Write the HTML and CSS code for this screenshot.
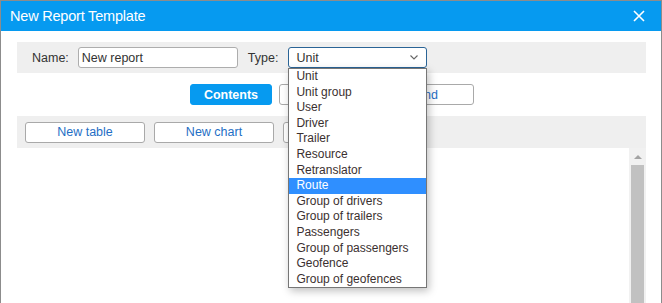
FILE: index.html
```html
<!DOCTYPE html>
<html lang="en">
<head>
  <meta charset="UTF-8" />
  <title>New Report Template</title>
  <link rel="stylesheet" href="styles.css">
</head>
<body>
  <div class="dialog">
    <div class="dialog-header">
      <span class="dialog-title">New Report Template</span>
      <span class="dialog-close">
        <svg width="12" height="12" viewBox="0 0 12 12"><path d="M1 1L11 11M11 1L1 11" stroke="#fff" stroke-width="1.6"/></svg>
      </span>
    </div>

    <div class="dialog-body">
      <div class="name-row">
        <label class="field-label">Name:</label>
        <input class="name-input" type="text" value="New report">
        <label class="field-label type-label">Type:</label>
        <div class="type-select">
          <div class="select-box">
            <span>Unit</span>
            <svg width="8" height="5" viewBox="0 0 8 5"><path d="M0.5 0.5L4 4L7.5 0.5" stroke="#666" stroke-width="1.1" fill="none"/></svg>
          </div>
          <ul class="select-list">
            <li>Unit</li>
            <li>Unit group</li>
            <li>User</li>
            <li>Driver</li>
            <li>Trailer</li>
            <li>Resource</li>
            <li>Retranslator</li>
            <li class="active">Route</li>
            <li>Group of drivers</li>
            <li>Group of trailers</li>
            <li>Passengers</li>
            <li>Group of passengers</li>
            <li>Geofence</li>
            <li>Group of geofences</li>
          </ul>
        </div>
      </div>

      <div class="tabs">
        <button class="tab active">Contents</button>
        <button class="tab wide">Background</button>
      </div>

      <div class="toolbar">
        <button class="tool-btn">New table</button>
        <button class="tool-btn">New chart</button>
        <button class="tool-btn"></button>
      </div>

      <div class="content">
        <div class="content-list"></div>
        <div class="scrollbar">
          <div class="scroll-up"></div>
          <div class="scroll-thumb"></div>
        </div>
      </div>
    </div>
  </div>
</body>
</html>
```

FILE: styles.css
```css
body {
  font-family: 'Liberation Sans', Arial, sans-serif;
  margin: 0;
  padding: 0;
  background: #fff;
  overflow: hidden;
}

.dialog {
  width: 662px;
  height: 303px;
  box-sizing: border-box;
  border: 1px solid #8c8c8c;
  border-bottom: none;
  display: flex;
  flex-direction: column;
}

.dialog-header {
  background-color: #069af0;
  color: white;
  height: 30px;
  display: flex;
  align-items: center;
  justify-content: space-between;
  padding: 0 16px 0 9px;
  flex-shrink: 0;
}

.dialog-title {
  font-size: 14.5px;
  letter-spacing: -0.2px;
}

.dialog-close {
  display: flex;
  align-items: center;
}

.dialog-body {
  padding: 11px 15px 0 16px;
  flex: 1;
  display: flex;
  flex-direction: column;
  min-height: 0;
}

.name-row {
  background: #efefef;
  height: 31px;
  display: flex;
  align-items: center;
  padding-left: 15px;
  font-size: 12.5px;
  color: #333;
  position: relative;
}

.field-label {
  margin-right: 9px;
}

.type-label {
  margin-left: 10px;
  margin-right: 10px;
}

.name-input {
  width: 160px;
  height: 21px;
  box-sizing: border-box;
  border: 1px solid #adadad;
  border-radius: 3px;
  padding: 0 3px;
  font-family: inherit;
  font-size: 12.5px;
  color: #333;
  background: #fff;
  outline: none;
}

.type-select {
  position: relative;
}

.select-box {
  width: 139px;
  height: 21px;
  box-sizing: border-box;
  border: 1px solid #2a6496;
  border-radius: 3px;
  background: #fff;
  display: flex;
  align-items: center;
  justify-content: space-between;
  padding: 0 8px 0 7px;
}

.select-list {
  position: absolute;
  top: 21px;
  left: 0;
  width: 139px;
  box-sizing: border-box;
  margin: 0;
  padding: 0;
  list-style: none;
  background: #fff;
  border: 1px solid #767676;
  box-shadow: 2px 3px 8px rgba(0, 0, 0, 0.25);
  z-index: 10;
}

.select-list li {
  height: 15.6px;
  line-height: 14px;
  padding-left: 7px;
  font-size: 12px;
  color: #3b3030;
  white-space: nowrap;
}

.select-list li.active {
  background: #2f8fff;
  color: #fff;
}

.tabs {
  display: flex;
  justify-content: flex-start;
  gap: 7px;
  padding-left: 173px;
  margin: 11px 0;
}

.tab {
  height: 21px;
  width: 82px;
  box-sizing: border-box;
  border: 1px solid #a9a9a9;
  border-radius: 3px;
  background: #fff;
  color: #1f6fc5;
  font-family: inherit;
  font-size: 12.5px;
  padding: 0;
}

.tab.wide {
  width: 195px;
  text-align: right;
  padding-right: 35px;
}

.tab.active {
  background: #069af0;
  border-color: #069af0;
  color: #fff;
  font-weight: bold;
}

.toolbar {
  background: #efefef;
  height: 32px;
  display: flex;
  align-items: center;
  gap: 9px;
  padding-left: 8px;
  flex-shrink: 0;
}

.tool-btn {
  height: 21px;
  width: 120px;
  box-sizing: border-box;
  border: 1px solid #a9a9a9;
  border-radius: 3px;
  background: #fff;
  color: #1f6fc5;
  font-family: inherit;
  font-size: 12.5px;
  padding: 0;
}

.content {
  flex: 1;
  display: flex;
}

.content-list {
  flex: 1;
  background: #fff;
}

.scrollbar {
  width: 17px;
  background: #f1f1f1;
  display: flex;
  flex-direction: column;
  align-items: center;
}

.scroll-up {
  width: 0;
  height: 0;
  border-left: 4px solid transparent;
  border-right: 4px solid transparent;
  border-bottom: 4px solid #a3a3a3;
  margin: 7px 0 6px;
}

.scroll-thumb {
  width: 13px;
  flex: 1;
  background: #c1c1c1;
}
```
